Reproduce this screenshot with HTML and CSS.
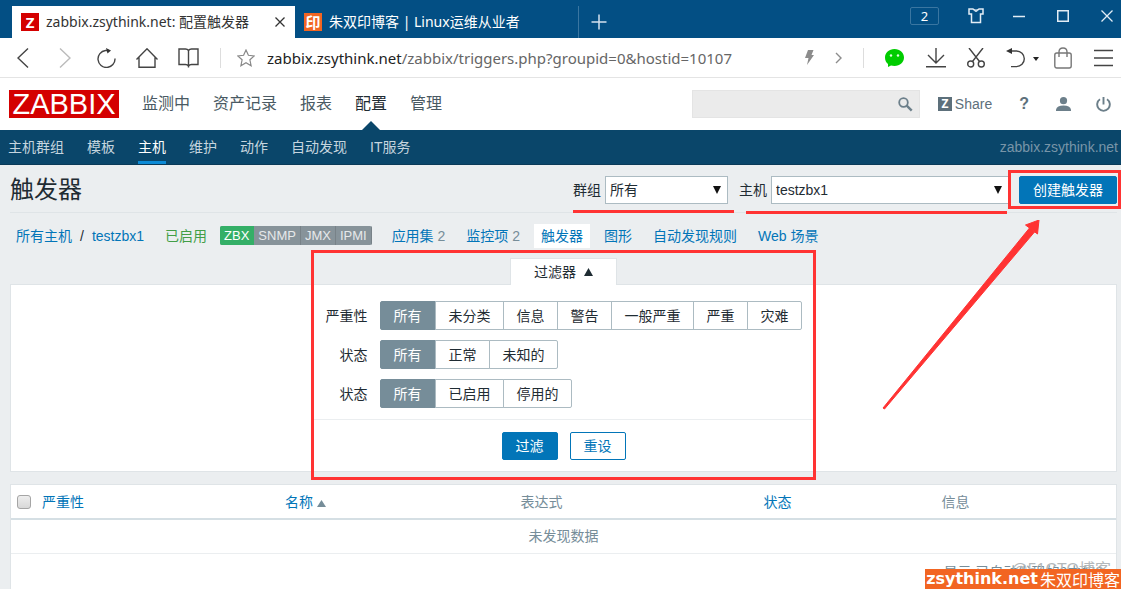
FILE: index.html
```html
<!DOCTYPE html>
<html lang="zh-CN">
<head>
<meta charset="utf-8">
<title>zabbix.zsythink.net: 配置触发器</title>
<link rel="stylesheet" href="styles.css">
</head>
<body>
<div class="tabbar">
  <div class="tab tab-active">
    <span class="fav fav-z">Z</span>
    <span class="tab-title">zabbix.zsythink.net: 配置触发器</span>
    <button class="icon-btn" aria-label="关闭标签"><svg width="10" height="10" viewBox="0 0 10 10"><path d="M.5 .5 9.500 9.500M9.500 .5 .5 9.500" stroke="#333" stroke-width="1.300"/></svg></button>
  </div>
  <div class="tab tab-idle">
    <span class="fav fav-yin">印</span>
    <span class="tab-title">朱双印博客 | Linux运维从业者</span>
  </div>
  <button class="icon-btn new-tab" aria-label="新标签"><svg width="16" height="16" viewBox="0 0 16 16"><path d="M8 .5v15M.5 8h15" stroke="#d5e2ee" stroke-width="1.500"/></svg></button>
  <div class="win">
    <button class="count">2</button>
    <button class="icon-btn" aria-label="皮肤"><svg width="16" height="16" viewBox="0 0 16 16" fill="none" stroke="#e3edf5" stroke-width="1.500"><path d="M1 1h4q3 2.500 6 0h4v5h-2.500v8.500h-9V6H1z"/><path d="M5 1q3 5 6 0" stroke-width="1"/></svg></button>
    <button class="icon-btn" aria-label="最小化"><svg width="12" height="12" viewBox="0 0 12 12"><path d="M0 6.500h12" stroke="#e3edf5" stroke-width="1.500"/></svg></button>
    <button class="icon-btn" aria-label="最大化"><svg width="12" height="12" viewBox="0 0 12 12"><path d="M.75 .75h10.500v10.500H.75z" fill="none" stroke="#e3edf5" stroke-width="1.500"/></svg></button>
    <button class="icon-btn" aria-label="关闭"><svg width="12" height="12" viewBox="0 0 12 12"><path d="M.5 .5l11 11M11.500 .5l-11 11" stroke="#e3edf5" stroke-width="1.300"/></svg></button>
  </div>
</div>

<div class="toolbar">
  <div class="tools-left">
    <button class="icon-btn" aria-label="后退"><svg width="12" height="20" viewBox="0 0 12 20" fill="none" stroke="#444" stroke-width="1.400"><path d="M11 .5 1 10l10 9.500"/></svg></button>
    <button class="icon-btn" aria-label="前进"><svg width="12" height="20" viewBox="0 0 12 20" fill="none" stroke="#bbb" stroke-width="1.400"><path d="M1 .5 11 10 1 19.500"/></svg></button>
    <button class="icon-btn" aria-label="刷新"><svg width="20" height="20" viewBox="0 0 20 20" fill="none" stroke="#444" stroke-width="1.400"><path d="M12.500 2.500H9.500a8.500 8.500 0 1 0 9.500 8"/><path d="M10 0l5 2.500-3.500 3z" fill="#333" stroke="none"/></svg></button>
    <button class="icon-btn" aria-label="主页"><svg width="22" height="20" viewBox="0 0 22 20" fill="none" stroke="#444" stroke-width="1.400"><path d="M.5 11.500 11 .8l10.500 10.700M3 9.500v9.800h16V9.500"/></svg></button>
    <button class="icon-btn" aria-label="收藏夹"><svg width="21" height="20" viewBox="0 0 21 20" fill="none" stroke="#444" stroke-width="1.400"><path d="M10.500 2.500Q9.500 1 7.500 1H1v15.500h6.500q2 0 3 1.500 1-1.500 3-1.500H20V1h-6.500q-2 0-3 1.500zV19.500"/></svg></button>
    <span class="vsep"></span>
    <button class="icon-btn" aria-label="收藏"><svg width="18" height="18" viewBox="0 0 18 18" fill="none" stroke="#888" stroke-width="1.200"><path d="M9 1l2.400 5.300 5.800.6-4.300 3.900 1.200 5.900L9 13.700l-5.100 3 1.200-5.900L.8 6.900l5.800-.6z"/></svg></button>
  </div>
  <div class="url"><b>zabbix.zsythink.net</b>/zabbix/triggers.php?groupid=0&amp;hostid=10107</div>
  <div class="tools-mid">
    <svg width="9" height="15" viewBox="0 0 9 15"><path d="M3 0h5.500L6.500 5H9L2 15l1.500-7H0z" fill="#8c8c8c"/></svg>
    <svg width="7" height="12" viewBox="0 0 7 12"><path d="M1 1l5 5-5 5" fill="none" stroke="#8c8c8c" stroke-width="1.400"/></svg>
    <span class="vsep"></span>
  </div>
  <div class="tools-right">
    <button class="icon-btn" aria-label="微信"><svg width="19" height="18" viewBox="0 0 19 18"><path d="M9.500 0C15 0 19 3.700 19 8.500S15 17 9.500 17q-2 0-3.500-.4L3 18v-3Q0 12.500 0 8.500C0 3.700 4 0 9.500 0z" fill="#0c0"/><circle cx="6" cy="6.500" r="1.200" fill="#dfd"/><circle cx="13" cy="6.500" r="1.200" fill="#dfd"/></svg></button>
    <button class="icon-btn" aria-label="下载"><svg width="20" height="20" viewBox="0 0 20 20" fill="none" stroke="#444" stroke-width="1.400"><path d="M10 0v15M2 7l8 8 8-8M0 18.800h20"/></svg></button>
    <button class="icon-btn" aria-label="截图"><svg width="18" height="20" viewBox="0 0 18 20" fill="none" stroke="#444" stroke-width="1.400"><path d="M2 0l10.500 13.500M16 0 5.500 13.500"/><circle cx="3.700" cy="16" r="3"/><circle cx="14.300" cy="16" r="3"/></svg></button>
    <button class="icon-btn" aria-label="撤销"><svg width="34" height="20" viewBox="0 0 34 20" fill="none" stroke="#444" stroke-width="1.400"><path d="M2 3h8.500a7.800 7.800 0 0 1 0 15.600H5"/><path d="M0 3l6-3v6z" fill="#333" stroke="none"/><path d="M27 9h6l-3 4z" fill="#222" stroke="none"/></svg></button>
    <button class="icon-btn" aria-label="购物"><svg width="18" height="22" viewBox="0 0 18 22" fill="none" stroke="#777" stroke-width="1.400"><rect x=".8" y="6" width="16.400" height="15" rx="2"/><path d="M5 10V5q0-4 4-4t4 4v5"/></svg></button>
    <button class="icon-btn" aria-label="菜单"><svg width="19" height="18" viewBox="0 0 19 18" stroke="#444" stroke-width="1.400"><path d="M0 1.500h19M0 9h19M0 16.500h19"/></svg></button>
  </div>
</div>

<header class="header">
  <a class="logo" href="#">ZABBIX</a>
  <nav class="mainnav">
    <a href="#">监测中</a><a href="#">资产记录</a><a href="#">报表</a><a href="#" class="on">配置</a><a href="#">管理</a>
  </nav>
  <div class="search">
    <input type="text" aria-label="搜索">
    <button class="icon-btn" aria-label="搜索"><svg width="15" height="15" viewBox="0 0 15 15" fill="none" stroke="#6c7f8a"><circle cx="5.500" cy="5.500" r="4.300" stroke-width="1.800"/><path d="M8.700 8.700l5 5" stroke-width="2.400"/></svg></button>
  </div>
  <div class="header-links">
    <a class="share" href="#"><span class="share-z">Z</span>Share</a>
    <a class="help" href="#">?</a>
    <a href="#" aria-label="用户"><svg width="15" height="14" viewBox="0 0 15 14" fill="#6c7f8a"><circle cx="7.500" cy="3.700" r="3.600"/><path d="M0 14v-1.500q1-4 7.500-4t7.500 4V14z"/></svg></a>
    <a href="#" aria-label="退出"><svg width="15" height="15" viewBox="0 0 15 15" fill="none" stroke="#6c7f8a" stroke-width="1.900"><path d="M4 2.300a6.300 6.300 0 1 0 7 0M7.500 0v7.500"/></svg></a>
  </div>
</header>

<nav class="subnav">
  <a href="#">主机群组</a><a href="#">模板</a><a href="#" class="on">主机</a><a href="#">维护</a><a href="#">动作</a><a href="#">自动发现</a><a href="#">IT服务</a>
  <span class="server">zabbix.zsythink.net</span>
</nav>

<main class="main">
  <div class="title-row">
    <h1>触发器</h1>
    <div class="field field-group">
      <label for="group">群组</label>
      <span class="select"><select id="group"><option>所有</option></select></span>
    </div>
    <div class="field field-host">
      <label for="host">主机</label>
      <span class="select"><select id="host"><option>testzbx1</option></select></span>
    </div>
    <div class="create">
      <button class="btn btn-primary">创建触发器</button>
      <svg class="arrow" width="160" height="192" viewBox="0 0 160 192"><path d="M1 188 147.500 8l5 4L2.500 189z" fill="#f33" stroke="#f33" stroke-linejoin="round"/><path d="M157 0l-1.500 14-12-9z" fill="#f33" stroke="#f33"/></svg>
    </div>
  </div>

  <div class="object-row">
    <div class="crumbs"><a href="#">所有主机</a><span>/</span><a href="#">testzbx1</a></div>
    <span class="enabled">已启用</span>
    <div class="badges"><span class="up">ZBX</span><span>SNMP</span><span>JMX</span><span>IPMI</span></div>
    <div class="links">
      <span><a href="#">应用集</a> <span class="num">2</span></span>
      <span><a href="#">监控项</a> <span class="num">2</span></span>
      <a href="#" class="selected">触发器</a>
      <a href="#">图形</a>
      <a href="#">自动发现规则</a>
      <a href="#">Web 场景</a>
    </div>
  </div>

  <section class="filter">
    <button class="filter-tab">过滤器 <svg width="9" height="8" viewBox="0 0 9 8"><path d="M0 8 4.500 0 9 8z" fill="#1f2c33"/></svg></button>
    <div class="filter-panel">
      <form class="filter-form">
        <div class="rows">
          <span class="lbl" id="l1">严重性</span>
          <div class="seg" role="radiogroup" aria-labelledby="l1">
            <label><input type="radio" name="sev" checked>所有</label><label><input type="radio" name="sev">未分类</label><label><input type="radio" name="sev">信息</label><label><input type="radio" name="sev">警告</label><label><input type="radio" name="sev">一般严重</label><label><input type="radio" name="sev">严重</label><label><input type="radio" name="sev">灾难</label>
          </div>
          <span class="lbl" id="l2">状态</span>
          <div class="seg" role="radiogroup" aria-labelledby="l2">
            <label><input type="radio" name="state" checked>所有</label><label><input type="radio" name="state">正常</label><label><input type="radio" name="state">未知的</label>
          </div>
          <span class="lbl" id="l3">状态</span>
          <div class="seg" role="radiogroup" aria-labelledby="l3">
            <label><input type="radio" name="status" checked>所有</label><label><input type="radio" name="status">已启用</label><label><input type="radio" name="status">停用的</label>
          </div>
        </div>
        <div class="actions">
          <button type="button" class="btn btn-primary">过滤</button>
          <button type="button" class="btn btn-alt">重设</button>
        </div>
      </form>
    </div>
    <div class="mark"></div>
  </section>

  <section class="list">
    <table>
      <colgroup><col class="c-check"><col class="c-wide"><col class="c-name"><col class="c-wide"><col class="c-state"><col></colgroup>
      <thead><tr>
        <th><input type="checkbox" aria-label="全选"></th>
        <th><a href="#">严重性</a></th>
        <th><a href="#">名称 <svg width="9" height="7" viewBox="0 0 9 7"><path d="M0 7 4.500 0 9 7z" fill="#768d99"/></svg></a></th>
        <th>表达式</th>
        <th><a href="#">状态</a></th>
        <th>信息</th>
      </tr></thead>
      <tbody><tr><td colspan="6">未发现数据</td></tr></tbody>
    </table>
    <div class="total">显示 已自动发现的0中的0</div>
  </section>
</main>
<div class="stamp-grey">@51CTO博客</div>
<div class="stamp"><span class="stamp-site">zsythink.net</span><span class="stamp-name">朱双印博客</span></div>
</body>
</html>
```
FILE: styles.css
```css
* { box-sizing: border-box; }
body {
  margin: 0;
  height: 100vh;
  overflow: hidden;
  position: relative;
  display: flex;
  flex-direction: column;
  background: #ebeef0;
  color: #1f2c33;
  font: 14px/20px "Liberation Sans", "Noto Sans CJK SC", sans-serif;
}
a { color: #0275b8; text-decoration: none; }
button, input, select { font: inherit; color: inherit; }
svg { display: block; }
.icon-btn { display: block; padding: 0; border: 0; background: none; }

/* browser tabs */
.tabbar {
  flex: none;
  height: 38px;
  display: flex;
  align-items: flex-end;
  padding-left: 12px;
  background: #034f84;
  font-family: "Noto Sans", "Noto Sans CJK SC", sans-serif;
}
.tab { height: 32px; display: flex; align-items: center; gap: 7px; color: #fff; }
.tab-title { white-space: nowrap; }
.tab-active { width: 283px; padding: 0 10px 0 9px; background: #fff; color: #333; }
.tab-active .icon-btn { margin-left: auto; }
.tab-idle { width: 284px; padding-left: 9px; border-right: 1px solid #3a76a1; }
.fav {
  width: 18px;
  height: 18px;
  color: #fff;
  font: bold 15px/18px "Open Sans", "Noto Sans CJK SC", sans-serif;
  text-align: center;
}
.fav-z { background: #d40000; }
.fav-yin { background: #f26522; }
.new-tab { margin: 0 0 8px 12px; }
.win { align-self: flex-start; height: 32px; margin-left: auto; padding-right: 8px; display: flex; align-items: center; gap: 32px; }
.count { width: 29px; height: 18px; padding: 0; border: 1px solid #3a76a1; border-radius: 2px; background: none; color: #fff; font-size: 13px; line-height: 14px; }
.count + .icon-btn { margin: 0 -3px; }

/* address bar */
.toolbar { flex: none; height: 40px; display: flex; align-items: center; padding: 0 8px 0 17px; border-bottom: 1px solid #e4e4e4; background: #fff; }
.tools-left { display: flex; align-items: center; gap: 20px; }
.tools-left .icon-btn:first-child { margin-right: 10px; }
.tools-left .icon-btn:nth-child(2) { margin-right: 5px; }
.tools-left .vsep { margin-left: 1px; }
.tools-left .icon-btn:last-child { margin-left: -4px; }
.vsep { width: 1px; height: 20px; background: #ddd; }
.url { flex: 1; padding-left: 12px; color: #666; font: 15px/20px "Noto Sans", sans-serif; white-space: nowrap; }
.url b { color: #222; font-weight: normal; }
.tools-mid { display: flex; align-items: center; gap: 21px; }
.tools-right { display: flex; align-items: center; gap: 22px; margin-left: 21px; }
.tools-right .icon-btn:nth-child(3), .tools-right .icon-btn:nth-child(4) { margin-left: -1px; }
.tools-right .icon-btn:nth-child(5) { margin-left: -8px; }

/* application header */
.header { flex: none; height: 52px; display: flex; align-items: center; padding: 0 10px 0 9px; background: #fff; }
.logo { width: 110px; height: 28px; background: #d40000; color: #fff; font-size: 29px; line-height: 29px; text-align: center; }
.mainnav { display: flex; align-self: stretch; gap: 23px; margin-left: 23px; }
.mainnav a { position: relative; color: #4a5a63; font-size: 16px; line-height: 52px; white-space: nowrap; }
.mainnav .on { color: #1f2c33; }
.mainnav .on::after {
  content: "";
  position: absolute;
  bottom: 0;
  left: 50%;
  margin-left: -9px;
  border: 9px solid transparent;
  border-top-width: 0;
  border-bottom-color: #0a466a;
}
.search { width: 228px; height: 28px; margin-left: auto; display: flex; align-items: center; padding-right: 6px; border: 1px solid #e4e4e4; background: #ebebeb; }
.search input { flex: 1; min-width: 0; border: 0; background: none; outline: 0; }
.header-links { display: flex; align-items: center; gap: 25px; margin-left: 18px; }
.header-links a { color: #5d707b; }
.header-links .share { display: flex; align-items: center; gap: 3px; }
.header-links .help { margin: 0 2px; font-size: 16px; font-weight: bold; }
.share-z { width: 14px; height: 14px; background: #5d707b; color: #fff; font: bold 12px/14px "Open Sans", sans-serif; text-align: center; }

.subnav { flex: none; height: 35px; display: flex; gap: 23px; padding: 0 3px 0 8px; border-bottom: 1px solid #0a3a58; background: #0a466a; line-height: 34px; white-space: nowrap; }
.subnav a { color: #c5d5df; }
.subnav .on { border-bottom: 3px solid #0c8ad6; color: #fff; }
.server { margin-left: auto; color: #7895a8; }

/* page */
.main { flex: 1; min-height: 0; display: flex; flex-direction: column; padding: 0 4px 0 10px; }
.title-row { flex: none; height: 48px; display: flex; align-items: center; border-bottom: 1px solid #dfe4e7; padding-top: 3px; }
h1 { margin: 0 auto 0 0; font-size: 24px; line-height: 32px; font-weight: normal; }
.field { position: relative; display: flex; align-items: center; gap: 4px; }
.field::after { content: ""; position: absolute; top: 34px; left: 0; right: -6px; height: 3px; background: #f33; }
.field-host { margin-left: 11px; }
.field-host::after { left: 7px; right: 2px; top: 35px; }
.select { position: relative; display: block; width: 123px; }
.field-host .select { width: 238px; }
.select select { display: block; width: 100%; height: 28px; padding: 0 4px; border: 1px solid #acbbc2; border-radius: 0; background: #fff; appearance: none; }
.select::after {
  content: "";
  position: absolute;
  top: 10px;
  right: 7px;
  border: 4px solid transparent;
  border-top: 8px solid #111;
  border-bottom: 0;
  pointer-events: none;
}
.create { position: relative; z-index: 2; margin-left: 10px; }
.create::before { content: ""; position: absolute; inset: -6px -4px -5px -11px; border: 3px solid #f33; pointer-events: none; }
.arrow { position: absolute; top: 44px; right: 75px; pointer-events: none; }
.btn { display: block; height: 28px; padding: 0 13px; border: 1px solid #0275b8; border-radius: 2px; line-height: 26px; white-space: nowrap; }
.btn-primary { background: #0275b8; color: #fff; }
.btn-alt { background: #fff; color: #0275b8; }

.object-row { flex: none; height: 45px; display: flex; align-items: center; padding-left: 6px; white-space: nowrap; }
.crumbs { display: flex; gap: 8px; }
.enabled { margin-left: 21px; color: #429e47; }
.badges { display: flex; margin-left: 13px; border-radius: 2px; overflow: hidden; background: #87939a; color: #e6e9eb; font-size: 13px; line-height: 19px; }
.badges span { padding: 0 4px; border-right: 1px solid #788288; }
.badges .up { background: #34af67; border-color: #34af67; color: #fff; }
.links { display: flex; align-items: center; gap: 21px; margin-left: 20px; }
.links .num { color: #768d99; }
.links .selected { margin: 0 -7px; padding: 2px 7px; background: #fff; }

.filter { flex: none; position: relative; }
.filter-tab { display: flex; align-items: center; justify-content: center; gap: 8px; width: 107px; height: 27px; margin: 0 auto -1px; padding: 0; position: relative; border: 1px solid #dfe4e7; border-bottom: 0; background: #fff; }
.filter-panel { border: 1px solid #dfe4e7; background: #fff; }
.filter-form { width: 500px; margin: 0 auto; }
.rows { display: grid; grid-template-columns: 54px 1fr; gap: 10px 12px; align-items: center; padding: 16px 0 11px; }
.lbl { text-align: right; white-space: nowrap; }
.seg { display: flex; }
.seg label { position: relative; height: 29px; margin-right: -1px; padding: 0 12px 0 13px; border: 1px solid #acbbc2; background: #fff; line-height: 28px; white-space: nowrap; }
.seg label:first-child { padding-right: 13px; border-radius: 2px 0 0 2px; }
.seg label:last-child { border-radius: 0 2px 2px 0; }
.seg input { position: absolute; opacity: 0; margin: 0; }
.seg label:has(:checked) { border-color: #768d99; background: #768d99; color: #fff; }
.actions { display: flex; justify-content: center; gap: 12px; padding: 12px 0 11px; border-top: 1px solid #ebeef0; }
.mark { position: absolute; top: -8px; left: 50%; width: 505px; height: 230px; margin-left: -253px; border: 3px solid #f33; pointer-events: none; }

.list { flex: 1; margin: 12px 0 -2px; border: 1px solid #dfe4e7; background: #fff; color: #768d99; }
table { width: 100%; table-layout: fixed; border-collapse: collapse; }
th, td { padding: 0; font-weight: normal; text-align: left; }
th { height: 34px; border-bottom: 2px solid #d5dfe4; }
td { height: 34px; border-bottom: 1px solid #ebeef0; text-align: center; }
th svg { display: inline-block; }
.c-check { width: 31px; }
.c-wide { width: 22%; }
.c-name { width: 21.3%; }
.c-state { width: 16.1%; }
th input { display: block; width: 14px; height: 14px; margin: 0 0 0 6px; appearance: none; border: 1px solid #a5a5a5; border-radius: 3px; background: linear-gradient(#eee, #d8d8d8); }
.total { padding: 8px 13px 0 0; text-align: right; }

.stamp { position: absolute; right: 0; bottom: 0; height: 20px; display: flex; align-items: center; padding: 0 1px; background: #f26522; color: #fff; white-space: nowrap; }
.stamp-site { font: bold 16px/20px "DejaVu Sans", sans-serif; }
.stamp-name { margin-left: 2px; font: 16px/20px "Noto Sans CJK SC", sans-serif; }
.stamp-grey { position: absolute; right: 10px; bottom: 9px; color: #b4b8bb; font-size: 16px; line-height: 20px; }
```
